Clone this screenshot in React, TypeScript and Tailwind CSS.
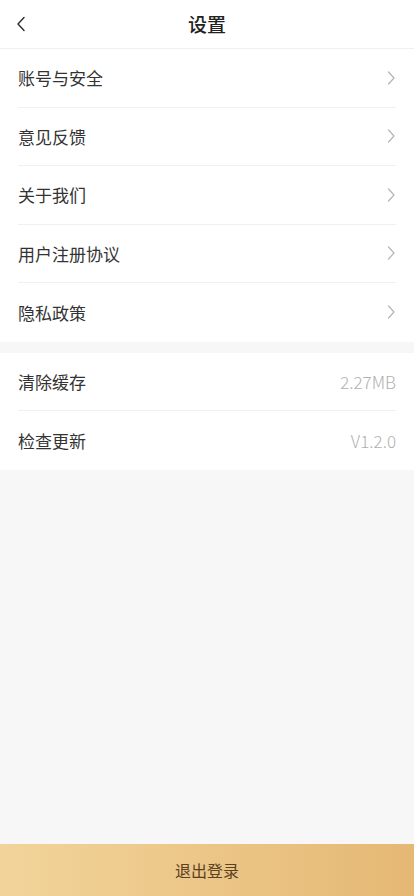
import React from "react";

const font = { fontFamily: '"Noto Sans CJK SC", "Noto Sans", sans-serif' };

const linkRows = ["账号与安全", "意见反馈", "关于我们", "用户注册协议", "隐私政策"];
const infoRows = [
  { label: "清除缓存", value: "2.27MB" },
  { label: "检查更新", value: "V1.2.0" },
];

function Chevron() {
  return (
    <svg width="10" height="16" viewBox="0 0 10 16" fill="none" className="shrink-0">
      <path d="M2.5 2L8 8L2.5 14" stroke="#b5b5b5" strokeWidth="1.2" strokeLinecap="round" strokeLinejoin="round" />
    </svg>
  );
}

function Row({ label, right, last }: { label: string; right: React.ReactNode; last?: boolean }) {
  return (
    <div className="px-[18px]">
      <div
        className={
          "flex h-[58.5px] items-center justify-between " + (last ? "" : "border-b border-[#f0f0f0]")
        }
      >
        <span className="text-[17px] text-[#333333]">{label}</span>
        {right}
      </div>
    </div>
  );
}

export default function App() {
  return (
    <div className="flex h-[896px] w-[414px] flex-col bg-[#f7f7f7]" style={font}>
      {/* Header */}
      <div className="relative flex h-[49px] shrink-0 items-center justify-center border-b border-[#efefef] bg-white">
        <button className="absolute left-[12px] top-1/2 -translate-y-1/2 p-1">
          <svg width="10" height="16" viewBox="0 0 10 16" fill="none">
            <path d="M8 1.5L2 8L8 14.5" stroke="#333333" strokeWidth="1.5" strokeLinecap="round" strokeLinejoin="round" />
          </svg>
        </button>
        <span className="text-[19px] font-medium text-[#222222]">设置</span>
      </div>

      {/* Link rows */}
      <div className="bg-white">
        {linkRows.map((r, i) => (
          <Row key={r} label={r} right={<Chevron />} last={i === linkRows.length - 1} />
        ))}
      </div>

      <div className="h-[11px] shrink-0" />

      {/* Info rows */}
      <div className="bg-white">
        {infoRows.map((r, i) => (
          <Row
            key={r.label}
            label={r.label}
            right={<span className="text-[17px] font-light text-[#b0b0b0]">{r.value}</span>}
            last={i === infoRows.length - 1}
          />
        ))}
      </div>

      <div className="flex-1" />

      {/* Logout */}
      <button className="flex h-[52px] w-full shrink-0 items-center justify-center bg-gradient-to-r from-[#f2d49a] to-[#e5b874]">
        <span className="text-[16px] text-[#5b4122]">退出登录</span>
      </button>
    </div>
  );
}
